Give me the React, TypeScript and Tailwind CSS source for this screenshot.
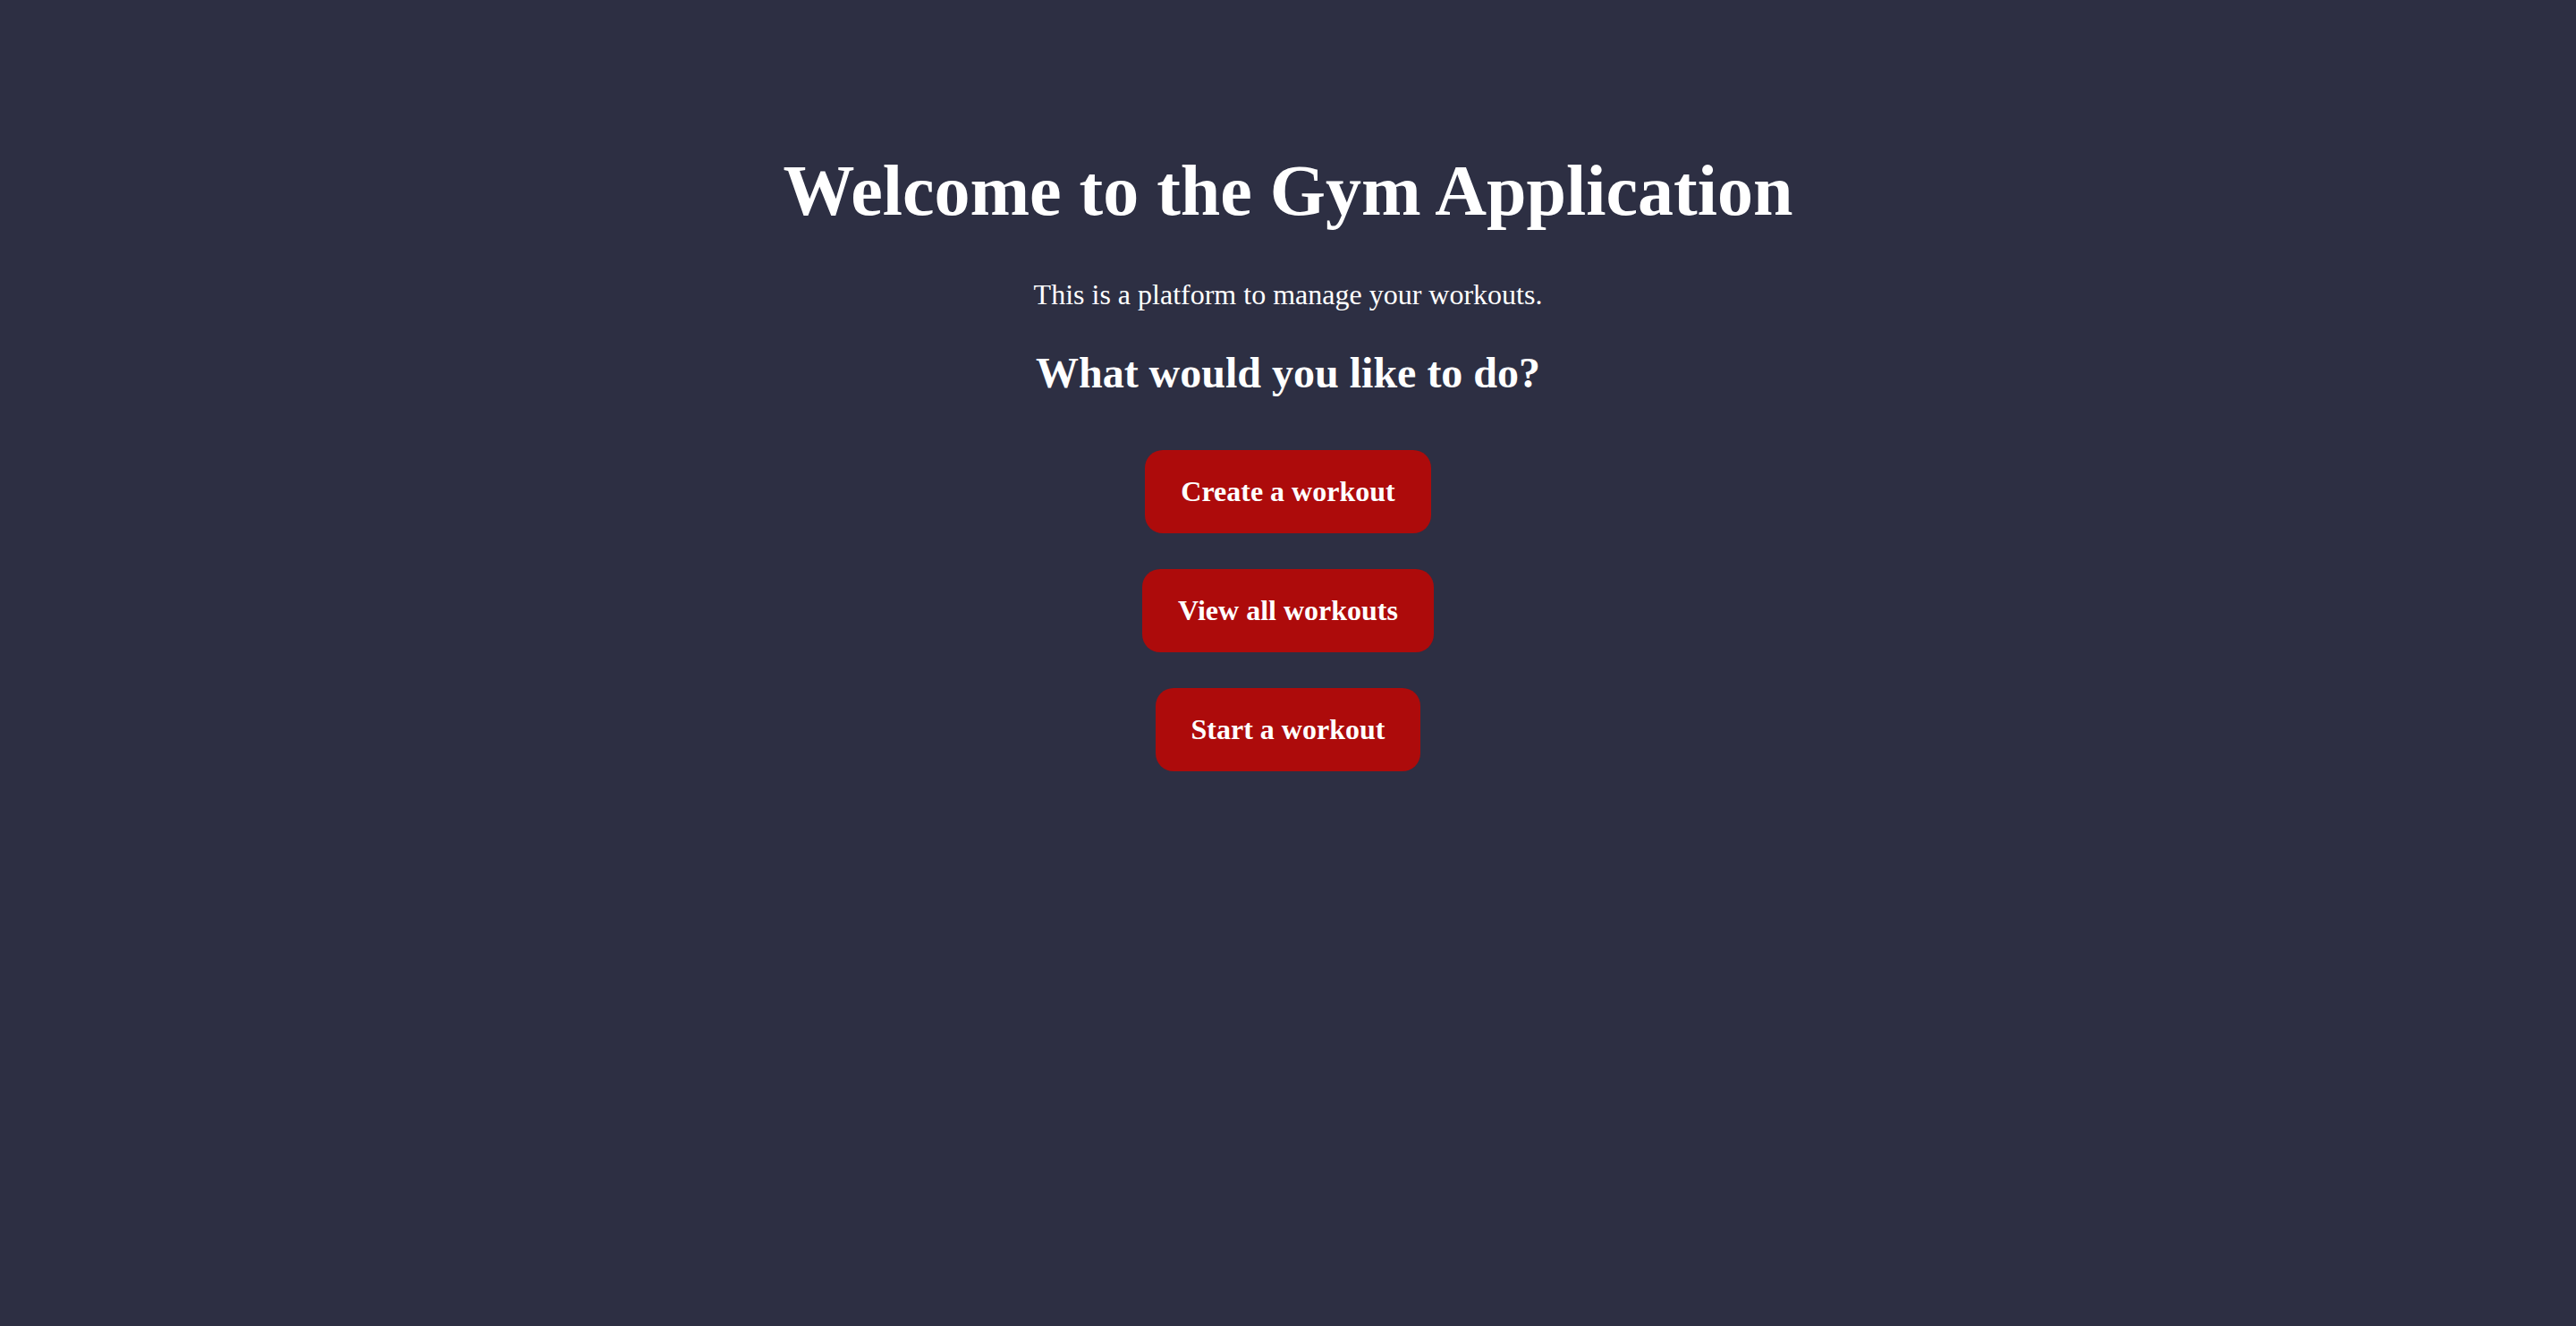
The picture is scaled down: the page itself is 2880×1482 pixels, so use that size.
export default function App() {
  const actions = ['Create a workout', 'View all workouts', 'Start a workout'];

  return (
    <div className="min-h-screen bg-[#2d2f43] text-white font-['Liberation_Serif','Times_New_Roman',serif]">
      <div className="flex flex-col items-center pt-[167px]">
        <h1 className="text-[80px] font-bold leading-[92px]">Welcome to the Gym Application</h1>
        <p className="mt-[52px] text-[32px] leading-[37px]">This is a platform to manage your workouts.</p>
        <h2 className="mt-[41px] text-[48px] font-bold leading-[55px]">What would you like to do?</h2>

        {/* Actions */}
        <div className="mt-[59px] flex flex-col items-center gap-[40px]">
          {actions.map((label) => (
            <button
              key={label}
              className="rounded-[20px] bg-[#ad0b0b] px-[40px] py-[28px] text-[32px] font-bold leading-[37px] text-white"
            >
              {label}
            </button>
          ))}
        </div>
      </div>
    </div>
  );
}
